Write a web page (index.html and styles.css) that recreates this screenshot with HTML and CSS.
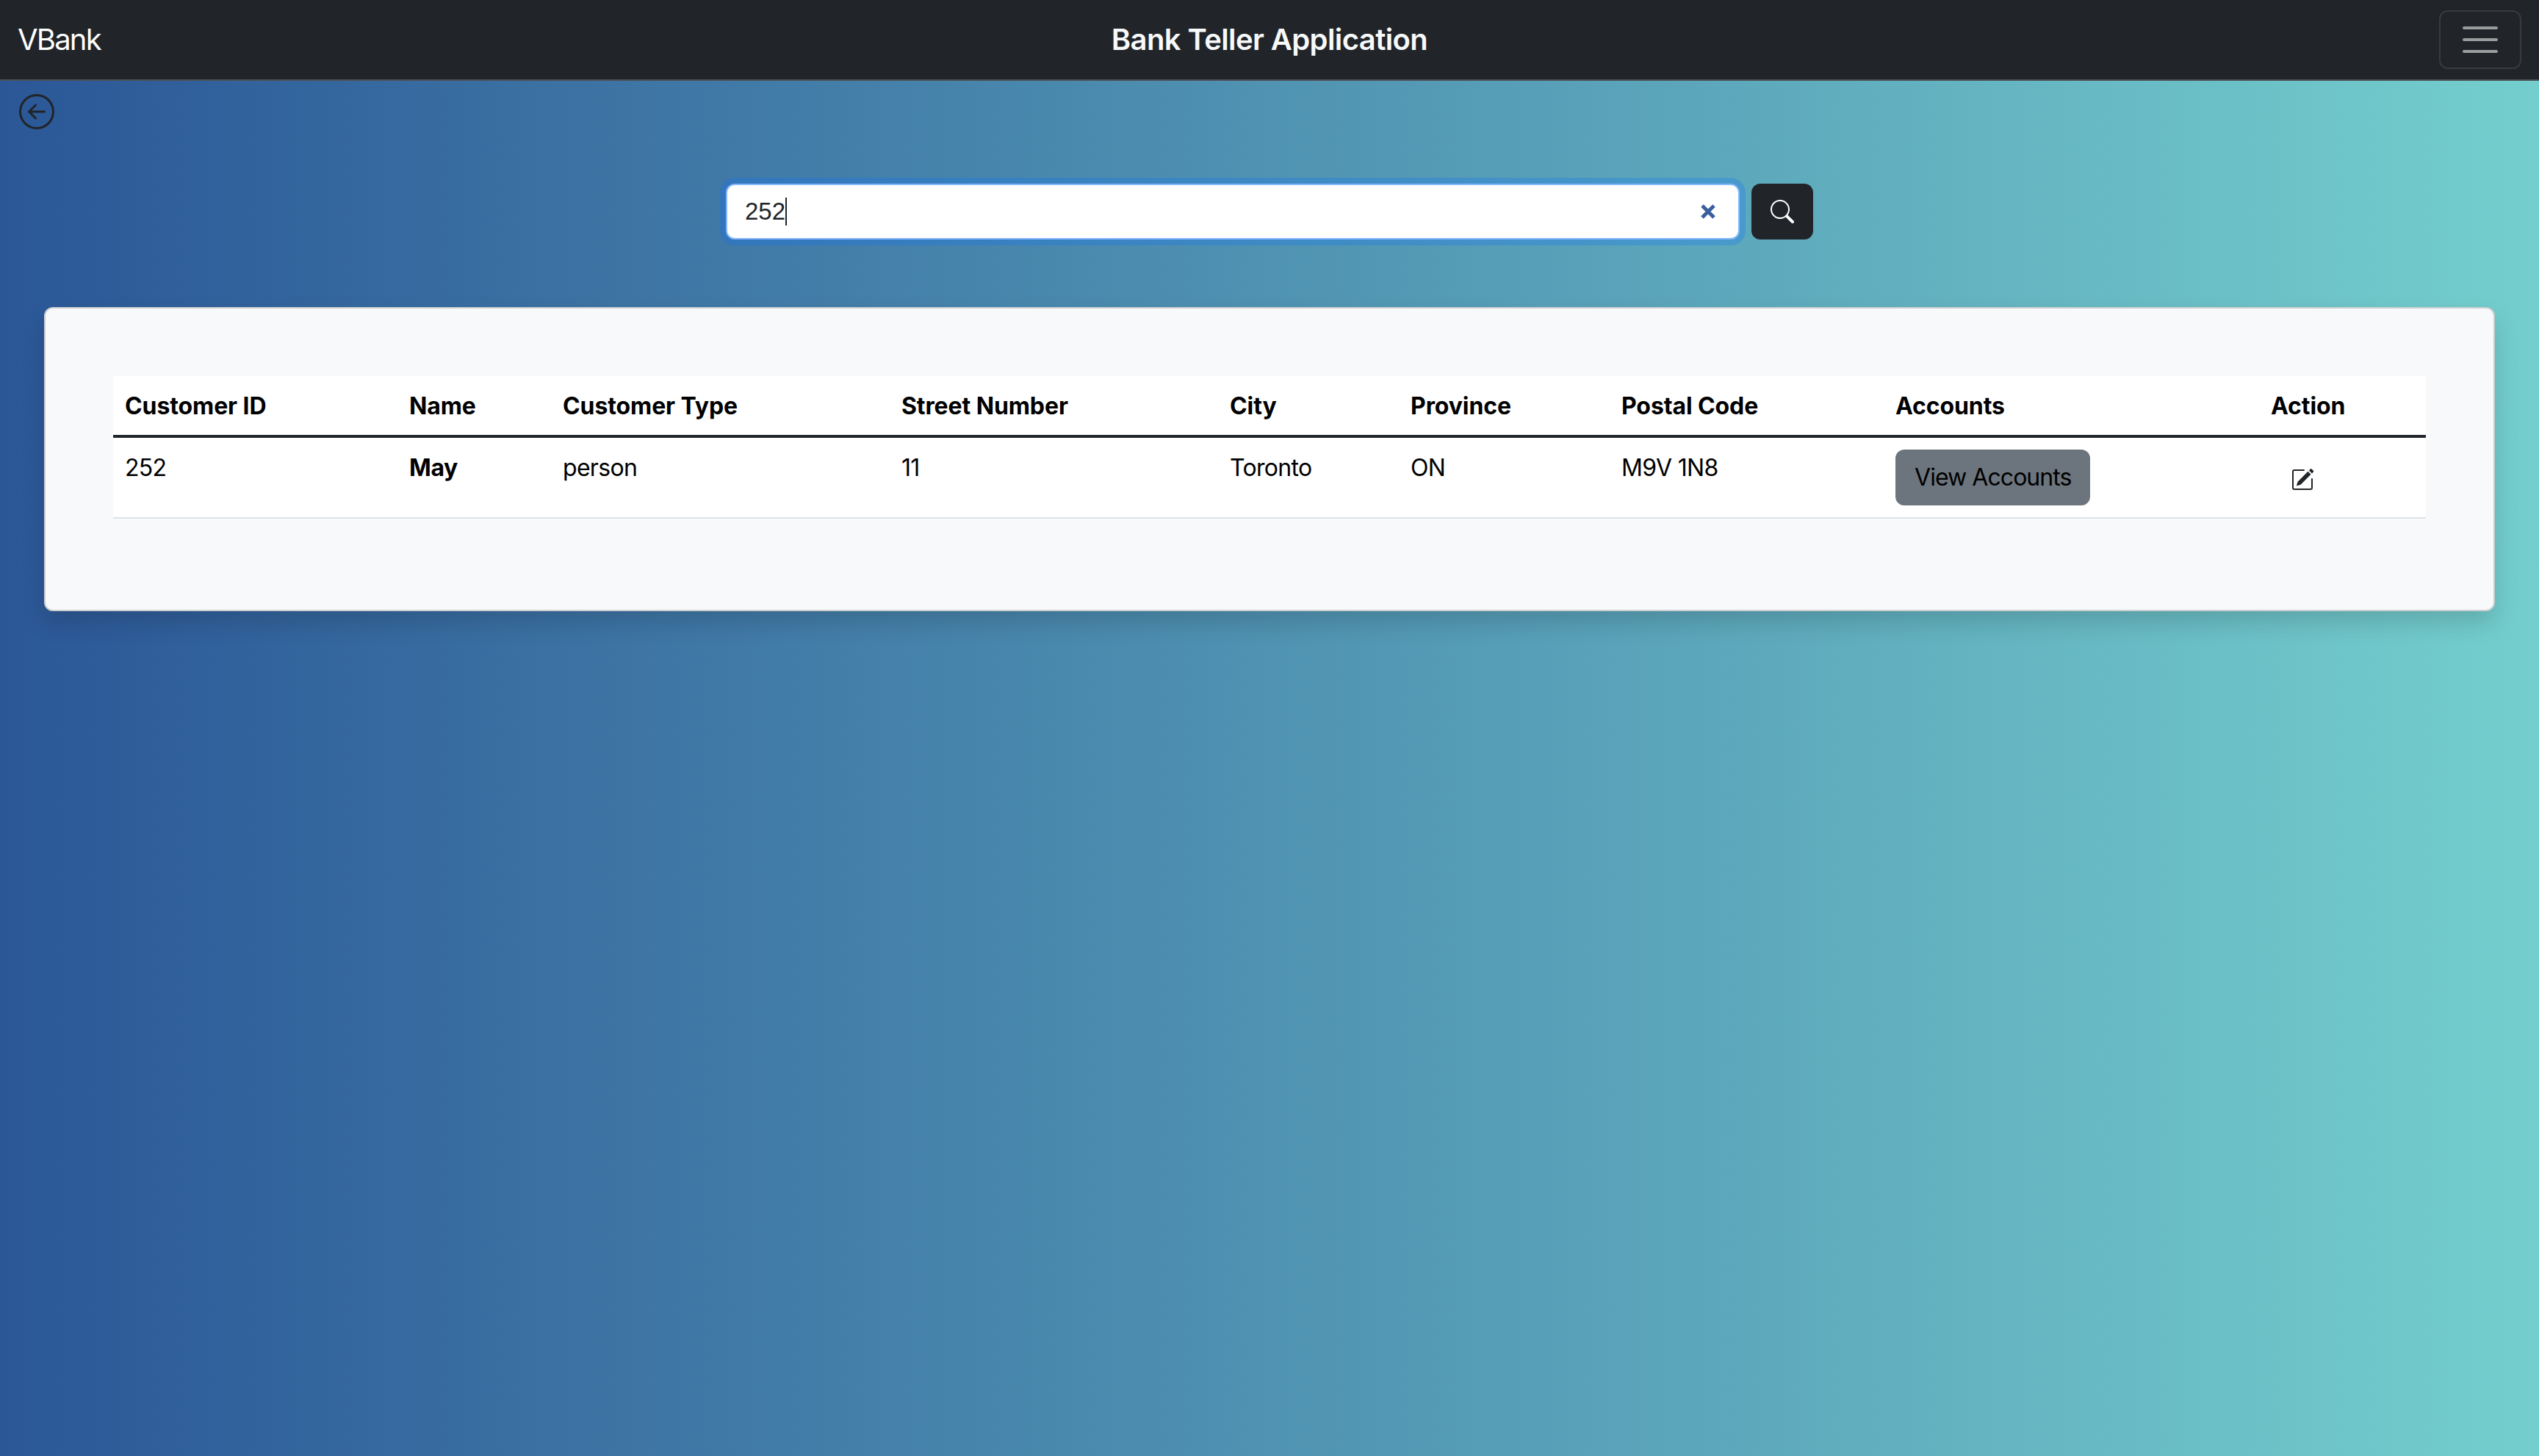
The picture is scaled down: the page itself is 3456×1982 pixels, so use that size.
FILE: index.html
```html
<!DOCTYPE html>
<html>
<head>
    <meta charset="utf-8">
    <title>Bank Teller Application</title>
    <meta name="viewport" content="width=device-width, initial-scale=1">
    <link rel="stylesheet" href="styles.css">
</head>
<body>
    <nav class="navbar">
        <a class="brand" href="#">VBank</a>
        <div class="app-title">Bank Teller Application</div>
        <div class="nav-end">
            <button class="toggler" aria-label="Menu">
                <svg width="60" height="60" viewBox="0 0 30 30"><path stroke="rgba(255,255,255,0.55)" stroke-linecap="round" stroke-width="2" d="M4 7h22M4 15h22M4 23h22"/></svg>
            </button>
        </div>
    </nav>

    <a class="back" href="#" aria-label="Back">
        <svg width="48" height="48" viewBox="0 0 16 16" fill="currentColor"><path fill-rule="evenodd" d="M1 8a7 7 0 1 0 14 0A7 7 0 0 0 1 8zm15 0A8 8 0 1 1 0 8a8 8 0 0 1 16 0zm-4.5-.5a.5.5 0 0 1 0 1H5.707l2.147 2.146a.5.5 0 0 1-.708.708l-3-3a.5.5 0 0 1 0-.708l3-3a.5.5 0 1 1 .708.708L5.707 7.5H11.5z"/></svg>
    </a>

    <div class="search-row">
        <div class="search-box">
            <span class="search-value">252</span>
            <span class="caret"></span>
            <svg class="search-clear" width="22" height="22" viewBox="0 0 22 22"><path stroke="#3a5f9e" stroke-width="5" d="M3 3l16 16M19 3L3 19"/></svg>
        </div>
        <button class="search-btn" aria-label="Search">
            <svg width="32" height="32" viewBox="0 0 16 16" fill="currentColor"><path d="M11.742 10.344a6.5 6.5 0 1 0-1.397 1.398h-.001c.03.04.062.078.098.115l3.85 3.85a1 1 0 0 0 1.415-1.414l-3.85-3.85a1.007 1.007 0 0 0-.115-.1zM12 6.5a5.5 5.5 0 1 1-11 0 5.5 5.5 0 0 1 11 0z"/></svg>
        </button>
    </div>

    <div class="card">
        <table class="customers">
            <thead>
                <tr>
                    <th class="col-id">Customer ID</th>
                    <th class="col-name">Name</th>
                    <th class="col-type">Customer Type</th>
                    <th class="col-street">Street Number</th>
                    <th class="col-city">City</th>
                    <th class="col-province">Province</th>
                    <th class="col-postal">Postal Code</th>
                    <th class="col-accounts">Accounts</th>
                    <th>Action</th>
                </tr>
            </thead>
            <tbody>
                <tr>
                    <td>252</td>
                    <td class="name">May</td>
                    <td>person</td>
                    <td>11</td>
                    <td>Toronto</td>
                    <td>ON</td>
                    <td>M9V 1N8</td>
                    <td class="cell-btn"><button class="btn-accounts">View Accounts</button></td>
                    <td class="cell-btn">
                        <button class="btn-edit" aria-label="Edit">
                            <svg width="32" height="32" viewBox="0 0 16 16" fill="currentColor"><path d="M15.502 1.94a.5.5 0 0 1 0 .706L14.459 3.69l-2-2L13.502.646a.5.5 0 0 1 .707 0l1.293 1.293zm-1.75 2.456-2-2L4.939 9.21a.5.5 0 0 0-.121.196l-.805 2.414a.25.25 0 0 0 .316.316l2.414-.805a.5.5 0 0 0 .196-.12l6.813-6.814z"/><path fill-rule="evenodd" d="M1 13.5A1.5 1.5 0 0 0 2.5 15h11a1.5 1.5 0 0 0 1.5-1.5v-6a.5.5 0 0 0-1 0v6a.5.5 0 0 1-.5.5h-11a.5.5 0 0 1-.5-.5v-11a.5.5 0 0 1 .5-.5H9a.5.5 0 0 0 0-1H2.5A1.5 1.5 0 0 0 1 2.5v11z"/></svg>
                        </button>
                    </td>
                </tr>
            </tbody>
        </table>
    </div>
</body>
</html>
```

FILE: styles.css
```css
* {
    box-sizing: border-box;
}

html {
    height: 100%;
}

body {
    margin: 0;
    min-height: 100%;
    font-family: Inter, "Liberation Sans", sans-serif;
    font-size: 32px;
    line-height: 48px;
    color: #000;
    background: linear-gradient(to right, #2b5797, #74cecd);
}

.navbar {
    display: grid;
    grid-template-columns: 1fr auto 1fr;
    align-items: center;
    height: 110px;
    padding: 0 24px;
    background: #212529;
    border-bottom: 2px solid #4d5054;
}

.brand {
    font-size: 40px;
    letter-spacing: -1.8px;
    color: #fff;
    text-decoration: none;
}

.app-title {
    font-size: 40px;
    font-weight: 600;
    letter-spacing: -0.6px;
    color: #f8f9fa;
}

.nav-end {
    display: flex;
    justify-content: flex-end;
}

.toggler {
    display: flex;
    align-items: center;
    justify-content: center;
    width: 112px;
    height: 80px;
    padding: 0;
    background: none;
    border: 2px solid rgba(255,255,255,0.1);
    border-radius: 12px;
}

.back {
    display: block;
    width: 48px;
    height: 48px;
    margin: 18px 0 0 26px;
    color: #212529;
}

.back svg {
    display: block;
}

.search-row {
    display: flex;
    justify-content: center;
    gap: 16px;
    margin-top: 74px;
}

.search-box {
    display: flex;
    align-items: center;
    width: 1380px;
    height: 76px;
    padding: 0 30px 0 24px;
    font-family: "Liberation Sans", Arial, sans-serif;
    font-size: 33px;
    color: #212529;
    background: #fff;
    border: 2px solid #86b7fe;
    border-radius: 12px;
    box-shadow: 0 0 0 8px rgba(13,110,253,0.25);
}

.caret {
    width: 2px;
    height: 38px;
    background: #212529;
}

.search-clear {
    margin-left: auto;
}

.search-btn {
    display: flex;
    align-items: center;
    justify-content: center;
    width: 84px;
    height: 76px;
    padding: 0;
    color: #fff;
    background: #212529;
    border: none;
    border-radius: 12px;
}

.card {
    margin: 92px 60px 0;
    padding: 92px 92px 124px;
    background: #f8f9fa;
    border: 2px solid rgba(0,0,0,0.17);
    border-radius: 12px;
    box-shadow: 0 16px 32px rgba(0,0,0,0.15);
}

.customers {
    width: 100%;
    table-layout: fixed;
    border-collapse: separate;
    border-spacing: 0;
    background: #fff;
}

.customers th,
.customers td {
    padding: 17px 16px 15px;
    text-align: left;
    vertical-align: top;
}

.customers th {
    font-weight: 700;
    letter-spacing: -0.1px;
    border-bottom: 4px solid #212529;
}

.customers td {
    letter-spacing: -0.7px;
    border-bottom: 2px solid #dee2e6;
}

.customers .name {
    font-weight: 700;
    letter-spacing: -0.4px;
}

.customers .cell-btn {
    padding: 16px;
}

.col-id { width: 387px; }
.col-name { width: 209px; }
.col-type { width: 461px; }
.col-street { width: 447px; }
.col-city { width: 246px; }
.col-province { width: 287px; }
.col-postal { width: 373px; }
.col-accounts { width: 511px; }

.btn-accounts {
    display: block;
    height: 76px;
    padding: 12px 24px;
    font: inherit;
    letter-spacing: -0.95px;
    color: #000;
    background: #6c757d;
    border: 2px solid #6c757d;
    border-radius: 12px;
}

.btn-edit {
    display: block;
    padding: 25px 24px 0 27px;
    color: #212529;
    background: none;
    border: none;
}

.btn-edit svg {
    display: block;
}
```
